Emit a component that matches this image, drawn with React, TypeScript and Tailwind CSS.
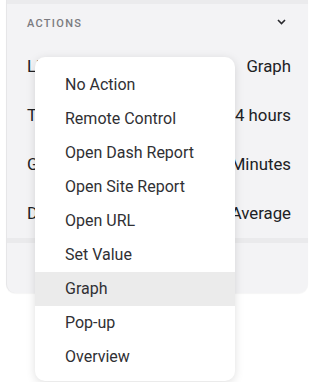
import React from 'react';

const ROWS = [
  { label: 'Link Type', value: 'Graph' },
  { label: 'Time Range', value: '24 hours' },
  { label: 'Granularity', value: '15 Minutes' },
  { label: 'Data Aggregation', value: 'Average' },
];

const OPTIONS = [
  'No Action',
  'Remote Control',
  'Open Dash Report',
  'Open Site Report',
  'Open URL',
  'Set Value',
  'Graph',
  'Pop-up',
  'Overview',
];

export default function App() {
  const selected = 'Graph';

  return (
    <div className="relative w-[309px] h-[382px] bg-white overflow-hidden font-['Roboto',sans-serif]">
      <div className="ml-[6px] mr-[1px] bg-[#f3f3f5] rounded-b-[9px] border-l border-[#e6e6e8] shadow-[0_1px_1px_rgba(0,0,0,0.04)]">
        <div className="h-[4px] bg-[#ebebed]" />
        <div className="h-[38px] flex items-center justify-between pl-[20px] pr-[22px]">
          <span className="text-[11px] tracking-[1.3px] text-[#7b7b80] font-medium pt-[2px]">ACTIONS</span>
          <svg width="9" height="6" viewBox="0 0 9 6" className="mb-[3px]">
            <path d="M1 1l3.5 3.5L8 1" fill="none" stroke="#2a2a2e" strokeWidth="1.6" />
          </svg>
        </div>
        {ROWS.map((r) => (
          <div key={r.label} className="h-[49px] flex items-center justify-between pl-[20px] pr-[17px] text-[16.8px] text-[#202124]">
            <span>{r.label}</span>
            <span>{r.value}</span>
          </div>
        ))}
        <div className="h-[5px] bg-[#eaeaec]" />
        <div className="h-[50px]" />
      </div>

      <div className="absolute left-[35px] top-[57px] w-[200px] bg-white rounded-[10px] pt-[11px] pb-[7px] shadow-[0_2px_10px_rgba(0,0,0,0.13)]">
        {OPTIONS.map((o) => (
          <div
            key={o}
            className={`h-[34px] flex items-center pl-[30px] text-[16px] text-[#303034] ${o === selected ? 'bg-[#ebebeb]' : ''}`}
          >
            {o}
          </div>
        ))}
      </div>
    </div>
  );
}
